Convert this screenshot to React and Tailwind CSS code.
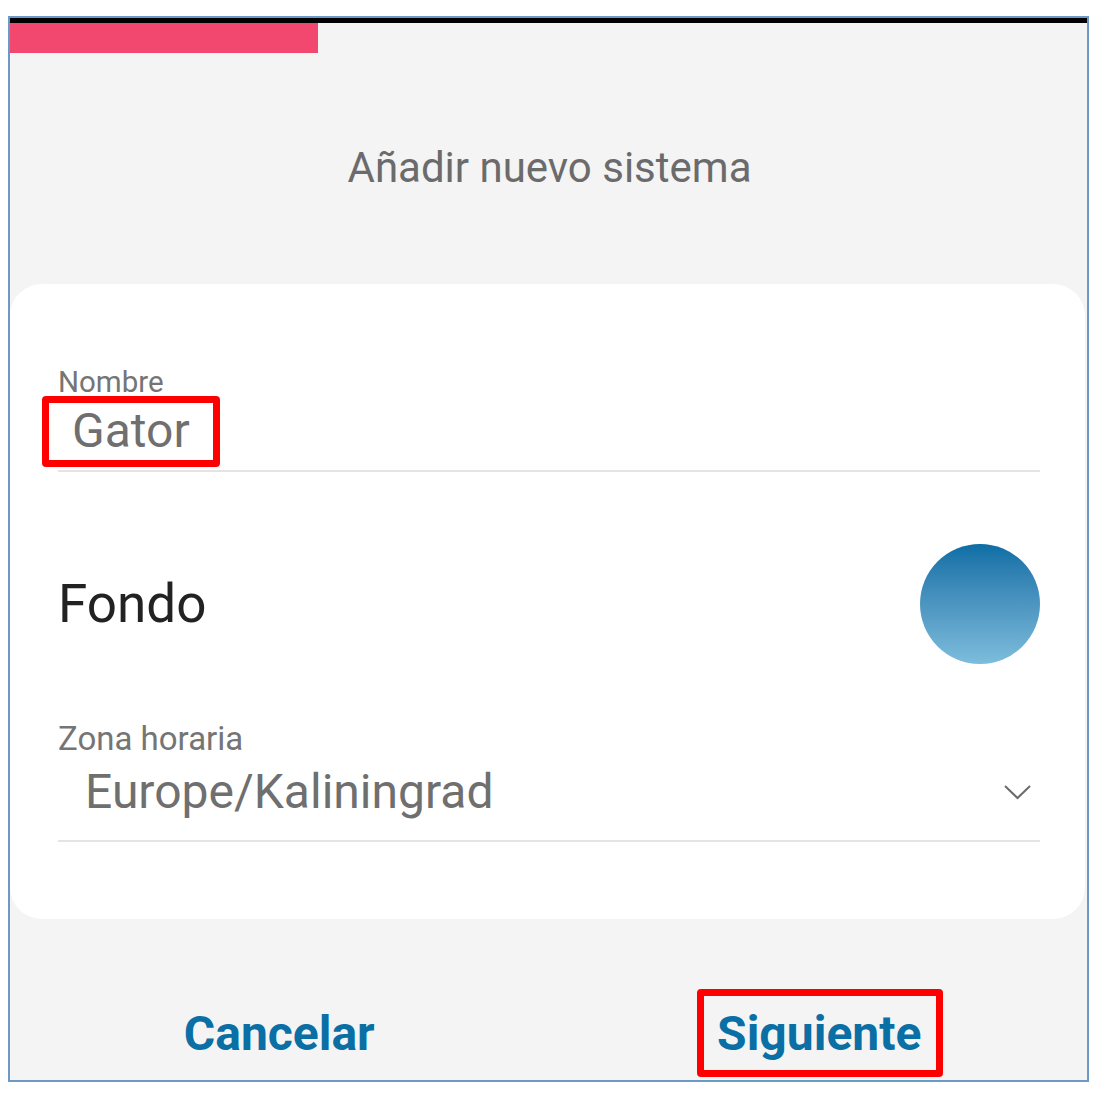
import React from "react";

export default function App() {
  const font = { fontFamily: "Roboto, 'Noto Sans', sans-serif" };
  return (
    <div className="w-[1100px] h-[1096px] bg-white pt-[16px] pl-[8px]" style={font}>
      <div className="w-[1081px] h-[1066px] border-2 border-[#6b9ac8] bg-[#f4f4f4] flex flex-col">
        <div className="h-[5px] bg-black" />
        <div className="h-[30px] w-[308px] bg-[#f2476f]" />
        <div className="mt-[94px] h-[42px] text-[42px] leading-none text-[#6b6b6b] text-center pl-[2px]">
          Añadir nuevo sistema
        </div>
        <div className="mt-[95px] mr-[2px] h-[635px] bg-white rounded-[32px] pl-[48px] pr-[45px] flex flex-col">
          <div className="mt-[84px] text-[29.5px] leading-none h-[29px] text-[#757575]">Nombre</div>
          <div className="mt-[10px] relative">
            <span className="relative inline-block pl-[14px] text-[48px] leading-none h-[48px] text-[#6f6f6f]">
              Gator
              <span className="absolute left-[-16px] right-[-30px] top-[-11px] bottom-[-12px] border-[7px] border-[#ff0000] rounded-[4px]" />
            </span>
          </div>
          <div className="mt-[15px] h-[2px] bg-[#e4e4e4]" />
          <div className="mt-[72px] h-[120px] flex items-center justify-between">
            <span className="text-[53px] leading-none text-[#222222]">Fondo</span>
            <div className="w-[120px] h-[120px] rounded-full bg-gradient-to-b from-[#0a6ea5] to-[#7dbddc]" />
          </div>
          <div className="mt-[58px] text-[33px] leading-none h-[32px] text-[#757575]">Zona horaria</div>
          <div className="mt-[14px] h-[48px] flex items-center justify-between">
            <span className="pl-[27px] text-[48px] leading-none text-[#6f6f6f]">Europe/Kaliningrad</span>
            <svg width="27" height="15" viewBox="0 0 27 15" className="mr-[9px]">
              <polyline points="1,1 13.5,13 26,1" fill="none" stroke="#6b6b6b" strokeWidth="2" />
            </svg>
          </div>
          <div className="mt-[24px] h-[2px] bg-[#e4e4e4]" />
        </div>
        <div className="mt-[91px] grid grid-cols-2">
          <div className="text-center">
            <span className="text-[48px] leading-none font-bold text-[#0a6fa5]">Cancelar</span>
          </div>
          <div className="text-center pl-[3px]">
            <span className="relative inline-block text-[48px] leading-none h-[48px] font-bold text-[#0a6fa5]">
              Siguiente
              <span className="absolute left-[-20px] right-[-22px] top-[-21px] bottom-[-19px] border-[7px] border-[#ff0000] rounded-[4px]" />
            </span>
          </div>
        </div>
      </div>
    </div>
  );
}
